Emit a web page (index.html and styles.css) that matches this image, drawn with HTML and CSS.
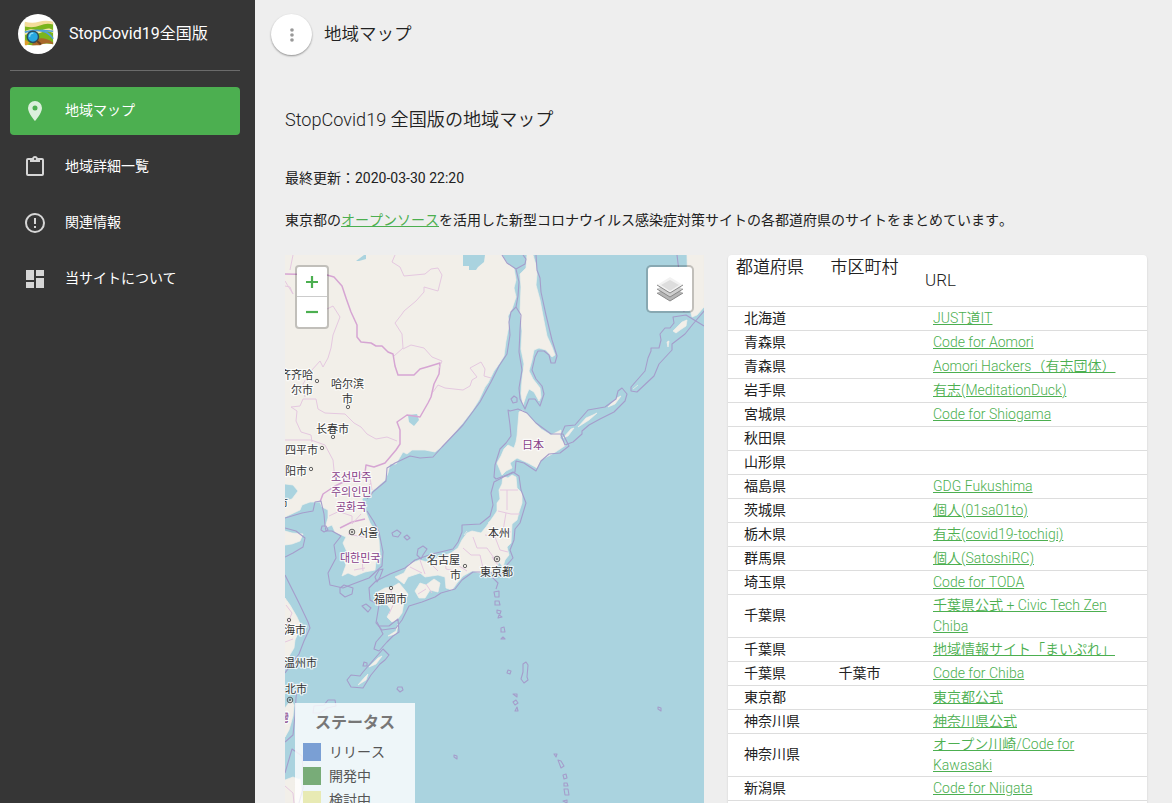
FILE: index.html
```html
<!DOCTYPE html>
<html lang="ja">
<head>
<meta charset="utf-8">
<title>StopCovid19全国版</title>
<link rel="stylesheet" href="styles.css">
</head>
<body>
<div class="app">
  <aside class="sidebar">
    <div class="brand">
      <span class="avatar">
        <svg width="32" height="28" viewBox="0 0 34 28">
          <path d="M2 2q8 2 15 0t15 0v23q-8-2-14 0t-16 0z" fill="#7ab51d"/>
          <path d="M2 1q8 2 15 0t15 0v3q-7-2-14 1T2 6z" fill="#f3dc9a"/>
          <path d="M2 11c9-5 13 1 18-1s8-3 12 0v3c-6-3-9-2-14 0S9 12 2 15z" fill="#f5e6a8"/>
          <path d="M2 12q12-3 19-1t11 8" fill="none" stroke="#4f9fd8" stroke-width="1.8"/>
          <path d="M19 10l13 1" fill="none" stroke="#4f9fd8" stroke-width="1.5"/>
          <path d="M14 20q7-4 18 3v2q-8-3-14 1H9z" fill="#a8672a"/>
          <path d="M2 20l5 3-3 3H2z" fill="#dd9b2b"/>
          <circle cx="10.500" cy="17" r="6" fill="#28a8e0" stroke="#2d4d5d" stroke-width="1.6"/>
          <path d="M7 17q0-4 4-4" fill="none" stroke="#8edcf7" stroke-width="1.4"/>
          <path d="M15 21.500l4 3.500" stroke="#6b4020" stroke-width="2.200"/>
        </svg>
      </span>
      <span class="brand-name">StopCovid19全国版</span>
    </div>
    <nav class="nav">
      <a class="nav-item active"><svg class="icon" viewBox="0 0 24 24"><path d="M12 11.5A2.5 2.5 0 0 1 9.5 9 2.5 2.5 0 0 1 12 6.5 2.5 2.5 0 0 1 14.5 9a2.5 2.5 0 0 1-2.5 2.5M12 2a7 7 0 0 0-7 7c0 5.25 7 13 7 13s7-7.75 7-13a7 7 0 0 0-7-7z"/></svg><span>地域マップ</span></a>
      <a class="nav-item"><svg class="icon" viewBox="0 0 24 24"><path d="M19 3h-4.18C14.4 1.84 13.3 1 12 1s-2.4.84-2.82 2H5a2 2 0 0 0-2 2v14a2 2 0 0 0 2 2h14a2 2 0 0 0 2-2V5a2 2 0 0 0-2-2m-7 0a1 1 0 0 1 1 1 1 1 0 0 1-1 1 1 1 0 0 1-1-1 1 1 0 0 1 1-1M7 7h10V5h2v14H5V5h2z"/></svg><span>地域詳細一覧</span></a>
      <a class="nav-item"><svg class="icon" viewBox="0 0 24 24"><path d="M11 15h2v2h-2zm0-8h2v6h-2zm1-5C6.47 2 2 6.5 2 12a10 10 0 1 0 10-10m0 18a8 8 0 1 1 0-16 8 8 0 0 1 0 16z"/></svg><span>関連情報</span></a>
      <a class="nav-item"><svg class="icon" viewBox="0 0 24 24"><path d="M13 3v6h8V3m-8 18h8V11h-8M3 21h8v-6H3m0-2h8V3H3z"/></svg><span>当サイトについて</span></a>
    </nav>
  </aside>

  <main class="main">
    <header class="topbar">
      <button class="menu-btn"><svg width="20" height="20" viewBox="0 0 24 24" fill="#999"><circle cx="12" cy="6" r="2.2"/><circle cx="12" cy="12" r="2.2"/><circle cx="12" cy="18" r="2.2"/></svg></button>
      <span>地域マップ</span>
    </header>
    <section class="content">
      <h1 class="heading">StopCovid19 全国版の地域マップ</h1>
      <p class="updated">最終更新：2020-03-30 22:20</p>
      <p class="intro">東京都の<a>オープンソース</a>を活用した新型コロナウイルス感染症対策サイトの各都道府県のサイトをまとめています。</p>
      <div class="columns">
        <div class="map">
          <svg class="map-canvas" width="419" height="548" viewBox="285 255 419 548">
            <g class="land">
              <path d="M285 255H502L507 263 514 268 516 280 514 288 516 297 512 309 508 316 509 325 506 341 504 356 499 364 494 371 488 383 485 387 479 400 472 411 462 424 445 444 440 448 435 452 425 450 412 450 407 454 403 452 396 464 390 464 388 473 385 480 376 488 368 494 362 499 364 507 370 523 376 532 379 540 380 557 376 562 375 570 365 572 355 576 348 573 342 576 346 565 343 557 347 552 343 543 346 537 335 532 332 525 325 528 328 518 328 510 322 507 320 502 310 502 302 505 300 510 285 517V501L292 499 298 491 293 485 285 484z"/>
              <path d="M285 531L292 533 303 534 300 541 292 544 285 545zM285 598L290 605 297 617 301 626 298 633 295 640 294 648 285 663zM285 708L291 700 294 705 293 716 289 730 285 737zM285 780L293 777 300 780 303 803H285zM295 780L300 779 301 800 296 803z"/>
              <path d="M527 255H533L536 265 537 274 536 285 540 300 544 321 547 336 552 347 555 355 552 357 546 350 539 348 534 350 532 360 529 371 533 379 540 388 541 397 539 401 534 392 529 389 526 396 523 405 521 394 522 380 524 364 521 349 522 331 520 311 521 287 520 274 526 268z"/>
              <path d="M519 412L522 410 527 414 536 424 541 429 551 435 561 430 560 438 566 445 554 453 541 460 537 468 528 463 517 458 510 463 512 468 506 471 502 475 500 470 497 463 501 456 504 449 508 445 514 448 516 442 517 436z"/>
              <path d="M503 476L508 478 512 475 516 477 517 488 522 493 522 503 519 512 517 520 512 524 511 543 507 547 509 555 505 560 503 567 499 562 496 569 491 572 485 570 480 573 472 571 463 576 457 583 452 590 446 588 445 577 438 575 425 577 420 573 408 577 404 584 395 577 404 573 409 564 420 560 430 563 437 558 451 553 458 548 462 540 467 533 472 531 481 533 486 527 493 517 497 511 497 503 500 499 499 490 502 484z"/>
              <path d="M415 591L420 583 426 585 434 579 440 583 438 592 430 590 425 598 419 598zM376 593L385 588 392 587 399 583 404 589 408 594 404 602 402 613 397 620 392 622 387 617 391 610 386 603 378 606 375 600z"/>
              <path d="M687 255H704V307L697 315 692 317 688 300z"/>
              <path d="M673 331l9-9 5-2-1 6-6 4-4 3zM667 342l2-1-1 6zM633 389l5-4M608 407l9-9 4-2-6 8zM578 427l8-9 7-3 4-2-8 7zM563 438l8-9 3-1-6 8zM358 685l7-8 3-3-2 6zM369 667l9-9 4-2-6 8zM388 636l8-5 2-7-2 10zM464 535l3-4M488 523l2-2"/>
            </g>
            <g class="water"><path d="M463 255h22l-1 7-6 5-2 3-7 0 0-4-6 0zM356 261l8-6h2v4l-7 2zM408 415l9-1 2 6-5 6-5-4z"/></g>
            <g class="country">
              <path d="M285 274L327 275 334 277 342 286 346 298 351 312 357 325 357 337 361 342 371 343 376 346 382 346 388 352 393 354 395 366 398 375 414 375 420 369 427 367 440 363 439 374 434 384 431 397 428 403 420 417 407 415 397 422 400 430 400 444 396 450 385 463 374 467 366 465 365 473 352 478 335 486 323 494 320 502"/>
              <path d="M340 528L352 522 365 519"/>
            </g>
            <g class="province">
              <path d="M395 255L392 262 400 267 404 276 425 274 431 269 438 268 442 275 438 291 424 287 424 292 416 301 404 311 402 314 395 323 402 334 403 348 394 356M403 349L411 345 424 348 432 357 442 361 439 368M433 392L438 385 445 388 463 390 470 386 472 380 477 377 470 368 481 362 485 369 484 376 491 378"/>
              <path d="M327 309L333 306 340 317 333 335 331 348 328 358 323 367 320 361 311 371 303 384 305 397M291 407L300 406 303 399 316 399 318 409 325 413 345 414 354 423 361 427 367 434 376 439 387 437 397 441M291 407L297 411 296 421 301 432 311 435 312 442M285 440L311 440 325 445 333 460 335 480M285 286L290 287 293 294 285 281M293 255l-3 15"/>
              <path d="M500 490h13l5 0M507 490l0 20M498 511l13 3 9 0M506 513l-3 18-8 5M500 530l11 2M485 535l10 2 5 13 8 2M473 537l4 11 10 0 7 10M463 548l8 7 9 0M455 556l4 10 8 5M445 557l1 12 10 2M430 563l8 8M420 560l5 14M410 567l12 6M480 555l3 13M492 557l6 8M379 598l13 0 9 7M391 590l2 15-4 9M340 512l12 4 0 8 9-10M329 516l15-7M348 534l15 3 14-2M350 552l12 6 16 0M362 558l1 13M354 570l11-2M365 490l6-7M370 478l2 12M426 584l6 9M418 594l8-5M286 605l6 8-5 12M285 642l8-3M285 786l8 7 1 10"/>
            </g>
            <g class="marine">
              <path d="M502 255L507 263 516 269 525 264 526 259 523 255M516 269L519 282 518 296 516 307 511 312 509 322 510 335 507 354 499 366 491 382 480 402 463 425 442 447 433 457 420 458 410 456 395 463 387 468 386 481 374 491 367 499"/>
              <path d="M516 307L521 315 520 330 519 352 522 370 519 388 520 399 525 409 529 399 535 399 540 406 544 394 542 386 536 379 532 370 535 357 538 351 544 351 549 355 551 363 555 363 557 356 552 340 546 315 541 292 540 278 537 270 536 255M510 411L508 410 510 425 511 436 506 443 500 449 495 465 494 477 496 479 515 472 516 461 524 463 536 471 541 461 549 454 560 453 569 446 563 434 551 434 536 423 527 413 518 409z"/>
              <path d="M494 482L513 472 519 476 521 490 526 503 520 523 515 529 514 540 510 550 513 558 506 566 507 571 499 574 486 572 473 572 462 580 455 589 441 593 435 597 422 602 409 606 402 620 396 628 382 630 376 623 379 605 370 600 369 588 376 581 390 574 405 568 415 560 432 554 453 549 458 542 462 532 462 525 480 524 490 516 493 505 491 493z"/>
              <path d="M285 518L302 513 313 511 315 502 321 501 324 514 325 526 326 531 332 531 341 536 334 545 336 558 328 573 330 585 343 588 353 584 369 578 382 566 383 552 379 532 374 522 367 511"/>
              <path d="M285 528L296 531 305 538 303 547 293 553 285 557M285 575L299 603 308 622 310 628 304 641 299 654 285 673M297 690L296 698 295 715 293 735 285 742M285 773L292 749 302 756 304 785 299 803"/>
              <path d="M340 588l4-3 9 3-1 6-7 3-5-4zM322 526l4 0 2 4-4 2-3-2zM392 533l5-3 4 3-3 4-5-1zM404 537l3-2 3 3-3 2zM418 549l5-3 4 3-4 6-2 4-4-4zM375 577l4-7 4-1-3 8-3 5zM362 606l4-2 5 4-3 4zM377 622l2 4 10 0 9-7 1 13-6 4-6 6-8 9-5-2 2-7 7-8zM383 649l6 6-4 5-5 4-9 11-8 13-12-1-4-7 4-5 9 1 3-4z"/>
              <path d="M705 310L693 324 685 334 672 344 672 350 659 364 654 376 637 392 631 391 631 387 645 371 648 358 651 351 651 348 659 348 661 340 660 334 665 328 670 328 674 323 673 317 686 315 704 326M677 255l7 57M627 394L622 388 618 391 616 399 605 407 588 410 575 425 565 426 561 435 565 445 573 442 582 434 582 431 589 425 600 419 614 412 625 401z"/>
              <path d="M314 706l10-1 4-5 7 0 1 6-9 2-7 5-7 0zM364 662l3 1 0 3-4 0zM398 687l4 0 1 3-3 2-3-3zM454 755l3 1 0 3-3-2zM492 577l6 6-2 6M494 592l5-1 0 6-4 0zM495 601l4 0 1 4-5 0zM497 610l4 1-1 3-3-1zM499 615l3 2-4 1zM501 628l3-1 1 5-4 0zM503 637l2 2-4 0zM508 670l3 1-1 3-3-1zM523 664l3-2 2 3-1 12 1 3-4 3-3-4 2-7zM513 694l4 0 0 3zM513 702l3-2 2 3-3 2zM517 707l1 4-3 0zM554 754l3 0-1 3zM558 760l3 1 3 5-3 2zM563 775l3-1 1 4-3 1zM564 783l3 0 1 3-4 0zM564 789l4 0 1 6-4 0zM563 801l4-1v3zM658 707l3 1 0 3-3-2zM511 399l3-3 3 2 0 4-4 1z"/>
            </g>
            <g class="labels">
              <text x="280" y="379">齐齐哈</text><text x="291" y="394">尔市</text><text x="331" y="388">哈尔滨</text><text x="342" y="403">市</text><text x="316" y="433">长春市</text><text x="285" y="454">四平市</text><text x="285" y="475">阳市</text><text x="277" y="507">市</text>
              <text x="358" y="537" class="kr">서울</text><text x="488" y="537">本州</text><text x="427" y="564">名古屋</text><text x="450" y="579">市</text><text x="480" y="576">東京都</text><text x="374" y="603">福岡市</text><text x="284" y="634">海市</text><text x="284" y="667">温州市</text><text x="285" y="693">北市</text>
              <g class="nation"><text x="522" y="449">日本</text><text x="331" y="481" class="kr">조선민주</text><text x="331" y="496" class="kr">주의인민</text><text x="336" y="511" class="kr">공화국</text><text x="340" y="562" class="kr">대한민국</text><text x="278" y="722">灣</text></g>
            </g>
            <g class="dots"><circle cx="317" cy="381" r="1.7"/><circle cx="348" cy="407" r="1.7"/><circle cx="333" cy="437" r="1.7"/><circle cx="322" cy="448" r="1.7"/><circle cx="311" cy="469" r="1.7"/><circle cx="465" cy="566" r="1.7"/><circle cx="391" cy="588" r="1.7"/><circle cx="289" cy="620" r="1.7"/><circle cx="352" cy="532" r="2.8"/><circle cx="352" cy="532" r=".8"/><circle cx="497" cy="559" r="2.8"/><circle cx="497" cy="559" r=".8"/><circle cx="290" cy="700" r="2.8"/><circle cx="290" cy="700" r=".8"/></g>
          </svg>
          <div class="zoom-ctl">
            <a><svg width="14" height="14" viewBox="0 0 14 14"><path d="M1 7h12M7 1v12"/></svg></a>
            <a><svg width="14" height="14" viewBox="0 0 14 14"><path d="M1 7h12"/></svg></a>
          </div>
          <div class="layers">
            <svg width="26" height="26" viewBox="0 0 26 26"><path d="M0 17l13-8 13 8-13 8z" fill="#b5b5b5"/><path d="M0 17l13 8 13-8" fill="none" stroke="#888"/><path d="M0 13l13-8 13 8-13 8z" fill="#cfcfcf"/><path d="M0 13l13 8 13-8" fill="none" stroke="#888"/><path d="M0 9l13-8 13 8-13 8z" fill="#f2f2f2"/><path d="M4 9l9-5 9 5-9 6z" fill="#ddd"/><path d="M0 9l13 8 13-8" fill="none" stroke="#888"/></svg>
          </div>
          <div class="legend">
            <h2>ステータス</h2>
            <div class="legend-row"><i class="released"></i>リリース</div>
            <div class="legend-row"><i class="developing"></i>開発中</div>
            <div class="legend-row"><i class="considering"></i>検討中</div>
          </div>
        </div>
        <div class="card">
          <table class="sites">
            <thead><tr><th class="pref">都道府県</th><th class="city">市区町村</th><th class="url">URL</th></tr></thead>
            <tbody>
              <tr><td>北海道</td><td></td><td><a>JUST道IT</a></td></tr>
              <tr><td>青森県</td><td></td><td><a>Code for Aomori</a></td></tr>
              <tr><td>青森県</td><td></td><td><a>Aomori Hackers（有志団体）</a></td></tr>
              <tr><td>岩手県</td><td></td><td><a>有志(MeditationDuck)</a></td></tr>
              <tr><td>宮城県</td><td></td><td><a>Code for Shiogama</a></td></tr>
              <tr><td>秋田県</td><td></td><td></td></tr>
              <tr><td>山形県</td><td></td><td></td></tr>
              <tr><td>福島県</td><td></td><td><a>GDG Fukushima</a></td></tr>
              <tr><td>茨城県</td><td></td><td><a>個人(01sa01to)</a></td></tr>
              <tr><td>栃木県</td><td></td><td><a>有志(covid19-tochigi)</a></td></tr>
              <tr><td>群馬県</td><td></td><td><a>個人(SatoshiRC)</a></td></tr>
              <tr><td>埼玉県</td><td></td><td><a>Code for TODA</a></td></tr>
              <tr class="tall"><td>千葉県</td><td></td><td><a>千葉県公式 + Civic Tech Zen Chiba</a></td></tr>
              <tr><td>千葉県</td><td></td><td><a>地域情報サイト「まいぷれ」</a></td></tr>
              <tr><td>千葉県</td><td>千葉市</td><td><a>Code for Chiba</a></td></tr>
              <tr><td>東京都</td><td></td><td><a>東京都公式</a></td></tr>
              <tr><td>神奈川県</td><td></td><td><a>神奈川県公式</a></td></tr>
              <tr class="tall"><td>神奈川県</td><td></td><td><a>オープン川崎/Code for Kawasaki</a></td></tr>
              <tr><td>新潟県</td><td></td><td><a>Code for Niigata</a></td></tr>
              <tr><td></td><td></td><td></td></tr>
            </tbody>
          </table>
        </div>
      </div>
    </section>
  </main>
</div>
</body>
</html>
```
FILE: styles.css
```css
* { box-sizing: border-box; }
body {
  margin: 0;
  font: 400 14px/21px Roboto, "Noto Sans CJK JP", sans-serif;
  color: #212121;
  background: #eee;
  overflow: hidden;
}
a { color: #4caf50; text-decoration: underline; }
.app { display: flex; height: 803px; overflow: hidden; }

.sidebar { flex: none; width: 255px; padding: 0 15px 0 10px; background: #363636; color: #fff; }
.brand { display: flex; align-items: center; gap: 11px; height: 71px; padding: 0 8px 3px; border-bottom: 1px solid #6b6b6b; }
.avatar { display: flex; align-items: center; justify-content: center; width: 40px; height: 40px; padding-left: 2px; border-radius: 50%; background: #fff; overflow: hidden; }
.brand-name { padding-top: 1px; font-size: 16px; line-height: 18px; white-space: nowrap; }
.nav { display: flex; flex-direction: column; gap: 8px; padding-top: 16px; }
.nav-item { display: flex; align-items: center; gap: 18px; height: 48px; padding-left: 13px; border-radius: 4px; color: #fff; text-decoration: none; }
.nav-item span { padding-bottom: 2px; }
.nav-item.active { background: #4caf50; }
.icon { width: 24px; height: 24px; fill: #fff; opacity: .8; }

.main { flex: 1; min-width: 0; }
.topbar { display: flex; align-items: center; gap: 12px; height: 69px; padding-left: 16px; font-size: 17.5px; font-weight: 350; }
.menu-btn { display: flex; align-items: center; justify-content: center; width: 41px; height: 41px; padding: 0; border: 0; border-radius: 50%; background: #fff; box-shadow: 0 1px 2px rgba(0,0,0,.4); }
.content { padding: 37px 25px 0 30px; }
.heading { margin: 0; font-size: 18.1px; line-height: 28px; font-weight: 350; }
.updated { margin: 34px 0 0; }
.intro { margin: 21px 0 0; font-kerning: none; }
.columns { display: flex; gap: 24px; margin-top: 24px; }

.map { position: relative; flex: none; width: 419px; height: 548px; background: #aad3df; overflow: hidden; }
.map-canvas { display: block; }
.land { fill: #f2efe9; stroke: #f2efe9; stroke-width: .7; stroke-linejoin: round; }
.water { fill: #aad3df; }
.country { fill: none; stroke: #d6a5d3; stroke-width: 1.5; stroke-linejoin: round; }
.province { fill: none; stroke: #e5c8e0; stroke-width: 1; stroke-linejoin: round; }
.marine { fill: none; stroke: #a59dcb; stroke-width: 1.1; stroke-linejoin: round; }
.labels { font: 400 11px "Noto Sans CJK SC", sans-serif; fill: #333; stroke: rgba(255,255,255,.75); stroke-width: 2.5px; stroke-linejoin: round; paint-order: stroke; }
.labels .kr { font-family: "Noto Sans CJK KR", sans-serif; }
.nation { fill: #883f89; }
.dots { fill: none; stroke: #555; stroke-width: .9; }

.zoom-ctl { position: absolute; left: 10px; top: 10px; width: 34px; border: 2px solid rgba(0,0,0,.2); border-radius: 4px; background: #fff; background-clip: padding-box; }
.zoom-ctl a { display: flex; align-items: center; justify-content: center; height: 30px; }
.zoom-ctl a:first-child { border-bottom: 1px solid #ccc; }
.zoom-ctl svg { fill: none; stroke: #4caf50; stroke-width: 2.2; }
.layers { position: absolute; right: 10px; top: 10px; display: flex; align-items: center; justify-content: center; width: 48px; height: 48px; border: 2px solid rgba(0,0,0,.2); border-radius: 5px; background: #fff; background-clip: padding-box; }
.legend { position: absolute; left: 10px; top: 448px; width: 120px; padding: 7px 8px; background: rgba(255,255,255,.8); color: #555; font-kerning: none; }
.legend h2 { margin: 0 0 4px; font-size: 16px; line-height: 26px; font-weight: 700; text-align: center; color: #777; }
.legend-row { display: flex; align-items: center; gap: 8px; height: 24px; }
.legend-row i { width: 18px; height: 18px; }
.released { background: #7a9fd4; }
.developing { background: #78ac78; }
.considering { background: #e8eab4; }

.card { width: 419px; height: 640px; background: #fff; border-radius: 4px; box-shadow: 0 1px 2px rgba(0,0,0,.15); }
.sites { width: 419px; border-collapse: separate; border-spacing: 0; table-layout: fixed; }
.sites th { height: 52px; padding: 0 8px; border-bottom: 1px solid #ddd; font-size: 17px; line-height: 24px; font-weight: 350; text-align: left; vertical-align: top; white-space: nowrap; }
.sites th.url { padding-bottom: 2px; vertical-align: middle; }
.pref { width: 94.5px; }
.city { width: 94.5px; }
.sites td { height: 24px; padding: 0 16px; border-bottom: 1px solid #ddd; }
.sites td:first-child { padding-right: 0; }
.sites .tall td:first-child { padding-bottom: 2px; }
.sites td:last-child { font-weight: 350; }
```
